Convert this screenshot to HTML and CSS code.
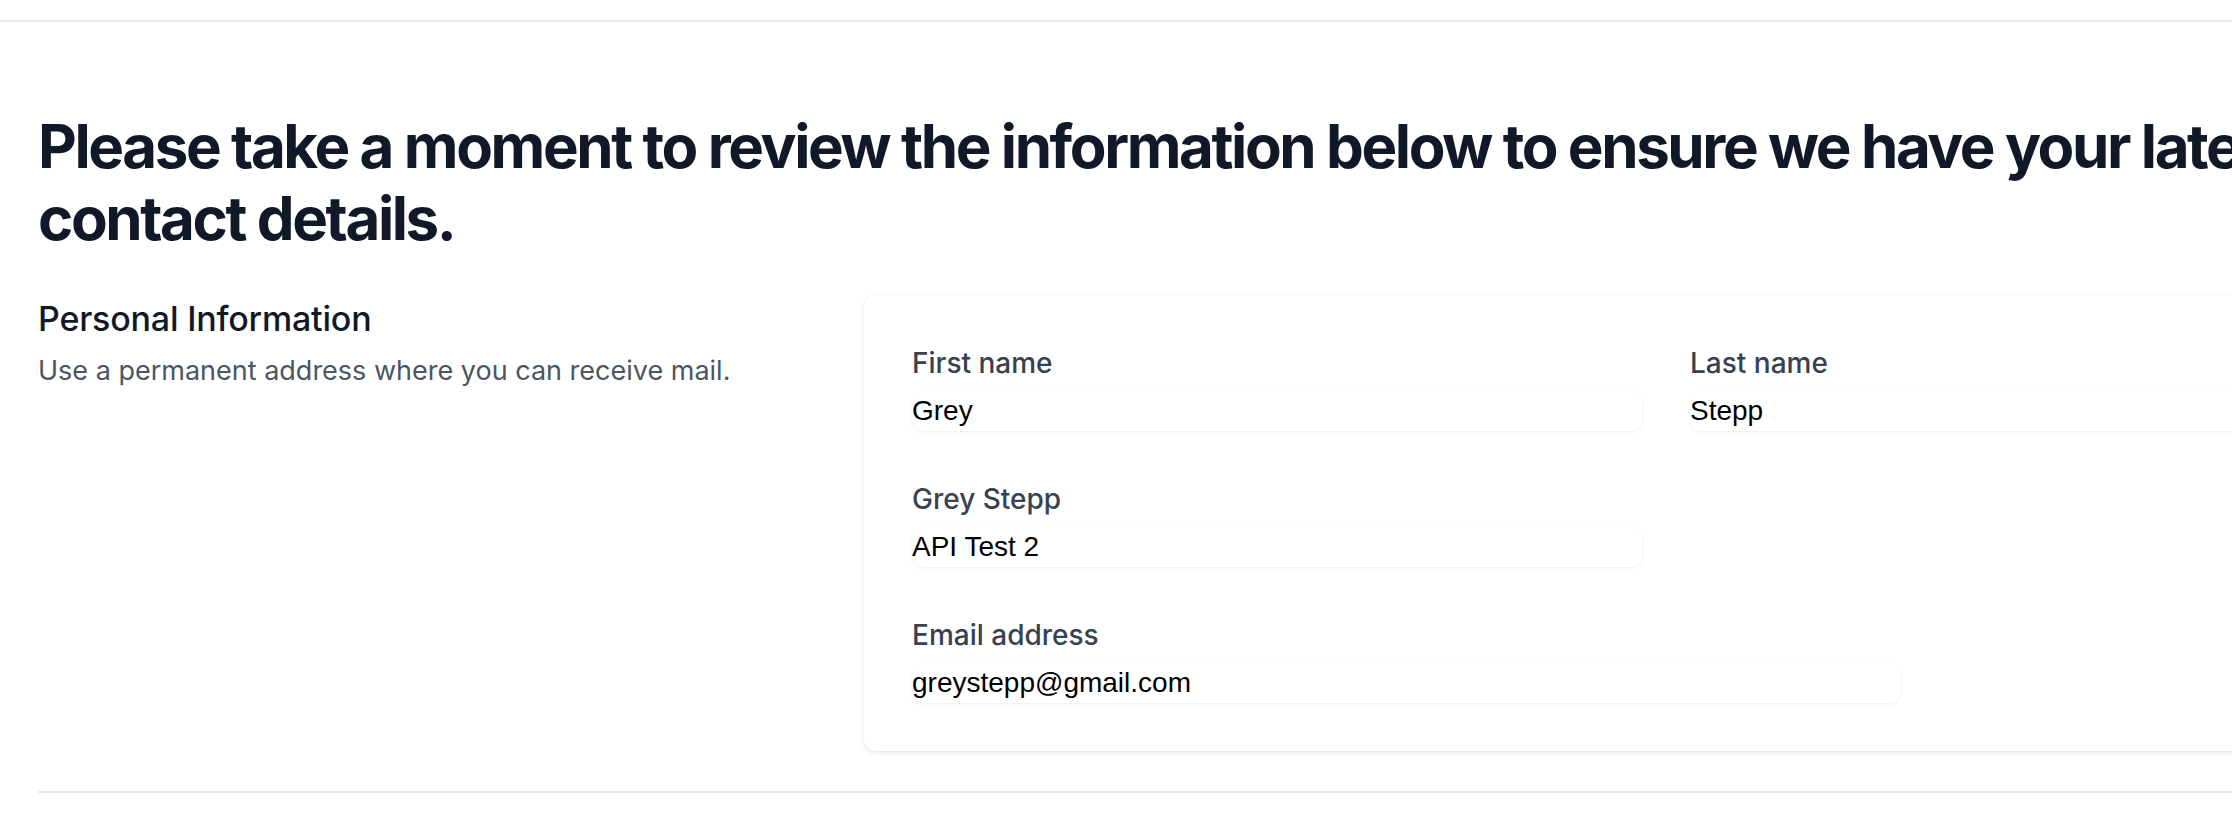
FILE: index.html
```html
<!DOCTYPE html>
<html lang="en">
<head>
<meta charset="utf-8">
<title>Contact details</title>
<link rel="stylesheet" href="styles.css">
</head>
<body>
<div class="topbar"></div>
<main class="page">
  <h1 class="title">Please take a moment to review the information below to ensure we have your latest contact details.</h1>
  <section class="section">
    <div class="intro">
      <h2 class="intro-title">Personal Information</h2>
      <p class="intro-text">Use a permanent address where you can receive mail.</p>
    </div>
    <form class="card">
      <div class="fields">
        <div class="field half">
          <label class="label" for="first">First name</label>
          <input class="input" id="first" type="text" value="Grey">
        </div>
        <div class="field half">
          <label class="label" for="last">Last name</label>
          <input class="input" id="last" type="text" value="Stepp">
        </div>
        <div class="field half">
          <label class="label" for="company">Grey Stepp</label>
          <input class="input" id="company" type="text" value="API Test 2">
        </div>
        <div class="field wide">
          <label class="label" for="email">Email address</label>
          <input class="input" id="email" type="text" value="greystepp@gmail.com">
        </div>
      </div>
    </form>
  </section>
  <div class="divider"></div>
</main>
</body>
</html>
```
FILE: styles.css
```css
html, body {
  margin: 0;
  padding: 0;
  background: #ffffff;
  overflow: hidden;
}

body {
  font-family: Inter, "Noto Sans", sans-serif;
  color: #111827;
}

.topbar {
  height: 20px;
  border-bottom: 2px solid #e5e7eb;
  width: 100%;
}

.page {
  width: 2430px;
  padding-left: 38px;
  padding-top: 88px;
}

.title {
  margin: 0 0 41px 0;
  font-size: 60px;
  line-height: 72px;
  font-weight: 700;
  color: #111827;
  letter-spacing: -2.4px;
}

.section {
  display: grid;
  grid-template-columns: 1fr 1fr 1fr;
  column-gap: 48px;
}

.intro-title {
  margin: 0;
  font-size: 34px;
  line-height: 48px;
  font-weight: 500;
  color: #111827;
  letter-spacing: -0.2px;
}

.intro-text {
  margin: 8px 0 0 0;
  font-size: 27px;
  line-height: 40px;
  color: #4b5563;
}

.card {
  grid-column: span 2;
  padding: 48px;
  border-radius: 12px;
  background: #ffffff;
  box-shadow: 0 2px 6px 0 rgba(0, 0, 0, 0.08), 0 2px 4px -2px rgba(0, 0, 0, 0.06), 0 0 0 1px rgba(0, 0, 0, 0.015);
}

.fields {
  display: grid;
  grid-template-columns: repeat(6, 1fr);
  gap: 48px;
}

.field.half {
  grid-column: span 3;
}

.field.wide {
  grid-column: span 4;
}

.label {
  display: block;
  font-size: 28px;
  line-height: 40px;
  font-weight: 500;
  color: #374151;
}

.input {
  display: block;
  box-sizing: border-box;
  width: 100%;
  height: 40px;
  margin-top: 8px;
  padding: 0;
  border: none;
  border-radius: 12px;
  background: #ffffff;
  font-family: "Liberation Sans", Arial, sans-serif;
  font-size: 28px;
  color: #000000;
  box-shadow: 0 2px 4px 0 rgba(0, 0, 0, 0.04), 0 0 0 1px rgba(0, 0, 0, 0.015);
  outline: none;
}

.divider {
  margin-top: 40px;
  border-top: 2px solid #e5e7eb;
  height: 40px;
}
```
